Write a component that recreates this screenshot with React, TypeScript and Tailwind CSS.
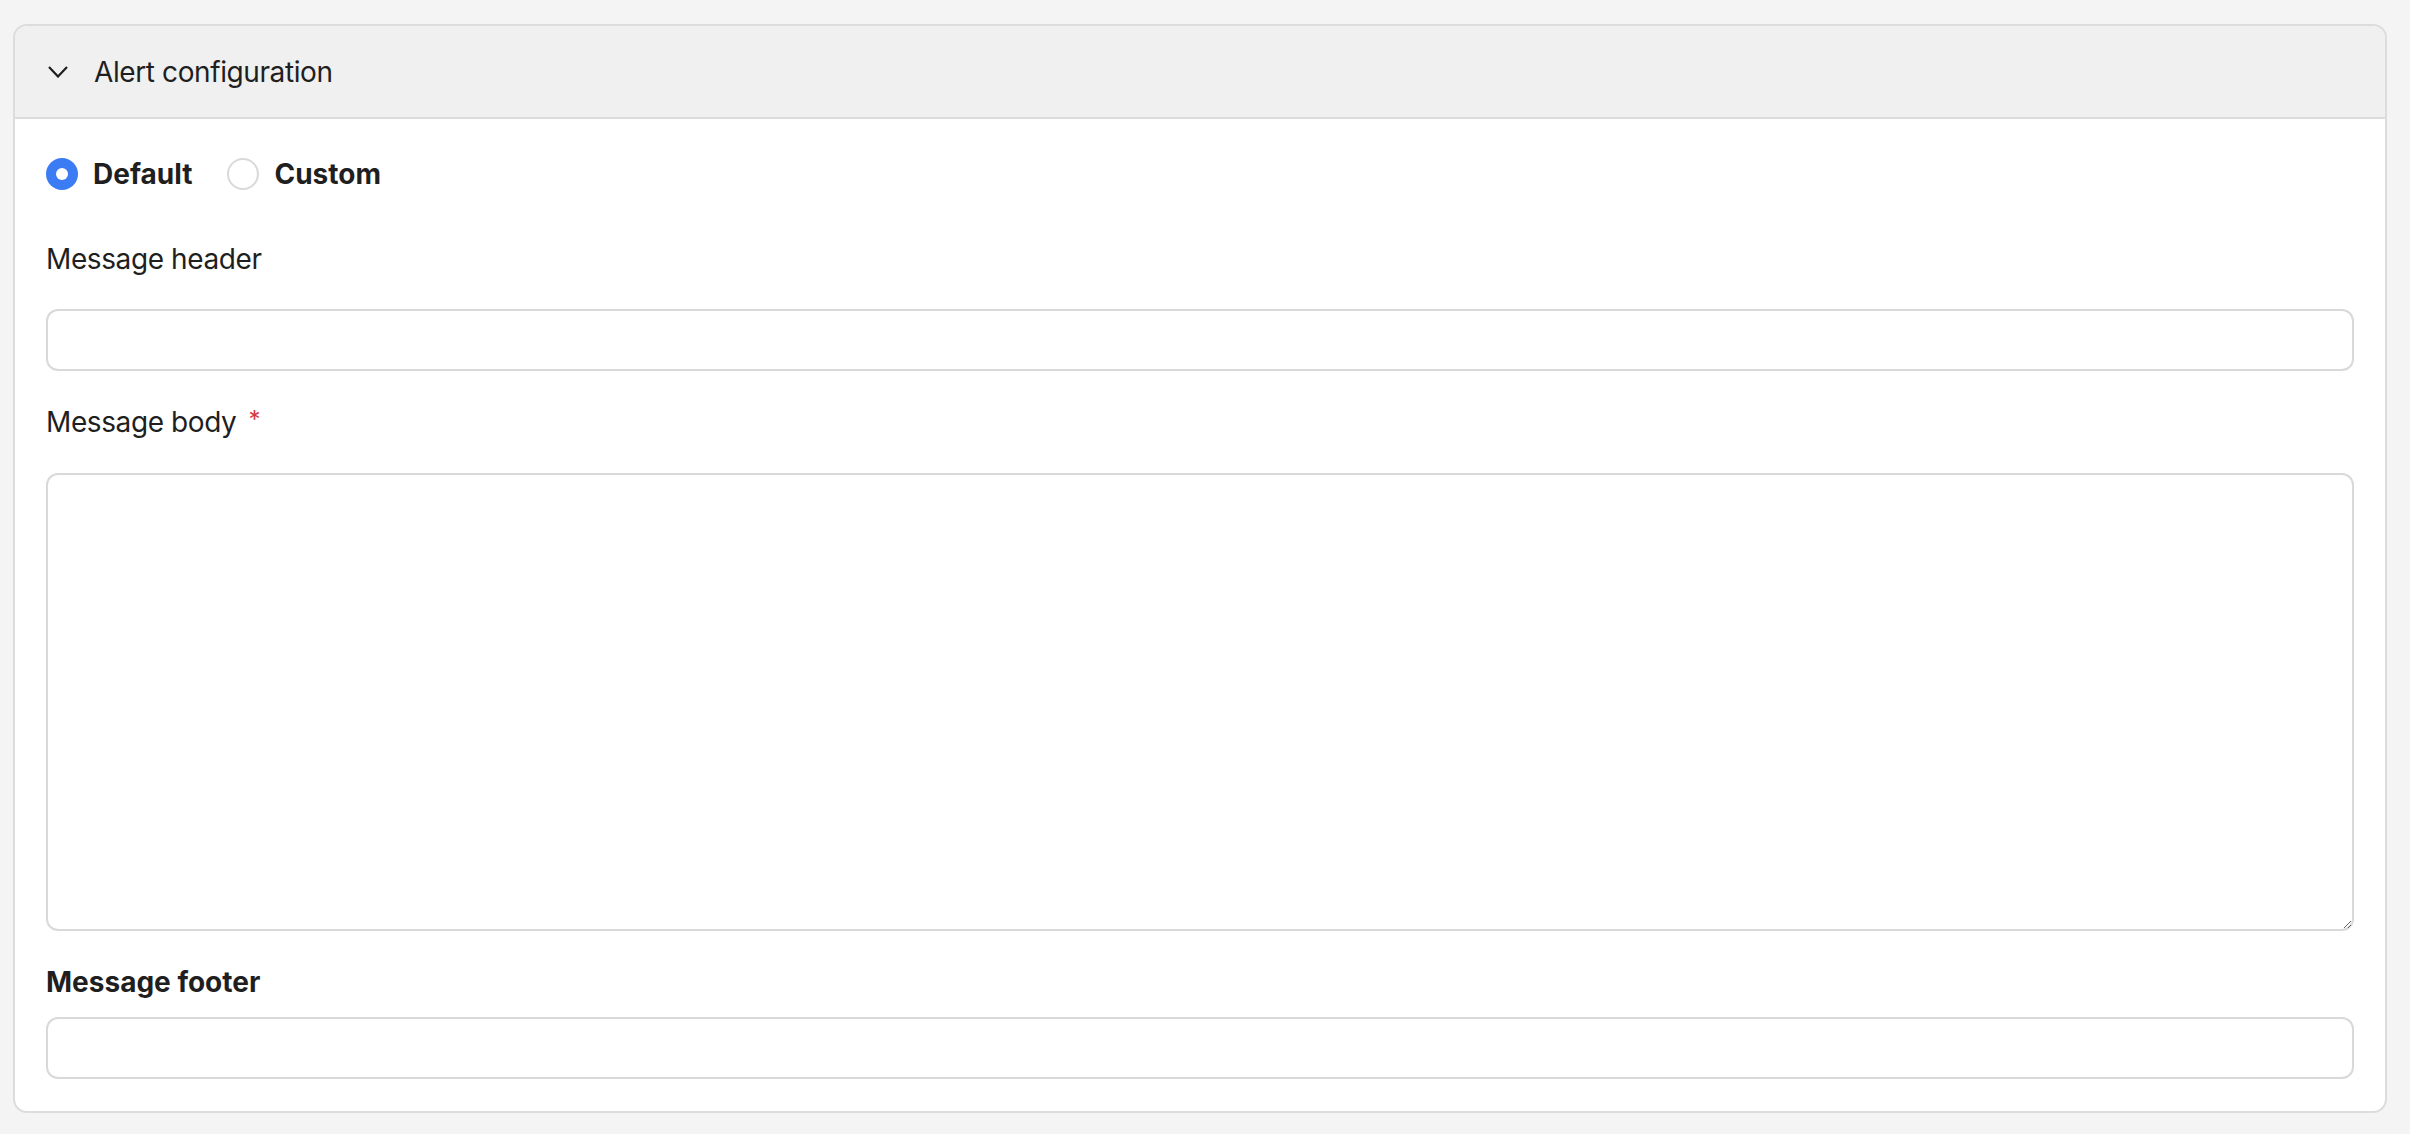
import { useState } from "react";

const fieldClass =
  "block w-full rounded-[12px] border-2 border-[#d9d9d9] bg-white px-4 text-[28px] text-[#1f1f1f] outline-none";

const Radio = ({ checked, label, onClick }: { checked: boolean; label: string; onClick: () => void }) => (
  <button type="button" onClick={onClick} className="flex items-center gap-[15px] cursor-pointer">
    {checked ? (
      <span className="flex h-[32px] w-[32px] items-center justify-center rounded-full bg-[#3b7cf5]">
        <span className="h-[12px] w-[12px] rounded-full bg-white" />
      </span>
    ) : (
      <span className="h-[32px] w-[32px] rounded-full border-2 border-[#d9d9d9] bg-white" />
    )}
    <span className="text-[28px] font-bold leading-[32px] text-[#1f1f1f]">{label}</span>
  </button>
);

const App = () => {
  const [mode, setMode] = useState("default");

  return (
    <div className="min-h-screen bg-[#f4f4f4] pt-[24px] pl-[13px] font-['Inter',sans-serif] text-[#1f1f1f]">
      <div className="w-[2374px] overflow-hidden rounded-[14px] border-2 border-[#dcdcdc] bg-white">
        <div className="flex h-[93px] items-center gap-[26px] border-b-2 border-[#dcdcdc] bg-[#f0f0f0] pl-[33px]">
          <svg width="20" height="12" viewBox="0 0 20 12" fill="none" className="mt-[1px]">
            <polyline points="1,1 10,10.5 19,1" stroke="#1f1f1f" strokeWidth="2.2" strokeLinejoin="miter" />
          </svg>
          <span className="text-[28px] leading-[40px] tracking-[-0.4px]">Alert configuration</span>
        </div>

        <div className="px-[31px] pt-[39px] pb-[32px]">
          <div className="flex items-center gap-[35px]">
            <Radio checked={mode === "default"} label="Default" onClick={() => setMode("default")} />
            <Radio checked={mode === "custom"} label="Custom" onClick={() => setMode("custom")} />
          </div>

          <label className="mt-[49px] block text-[28px] leading-[40px] tracking-[-0.4px]">Message header</label>
          <input className={`${fieldClass} mt-[30px] h-[62px]`} />

          <label className="mt-[31px] flex items-start text-[28px] leading-[40px] tracking-[-0.4px]">
            Message body
            <span className="ml-[12px] text-[24px] leading-[36px] text-[#d9363e]">*</span>
          </label>
          <textarea className={`${fieldClass} mt-[31px] h-[458px] py-3`} />

          <label className="mt-[31px] block text-[28px] font-bold leading-[40px]">Message footer</label>
          <input className={`${fieldClass} mt-[15px] h-[62px]`} />
        </div>
      </div>
    </div>
  );
};

export default App;
